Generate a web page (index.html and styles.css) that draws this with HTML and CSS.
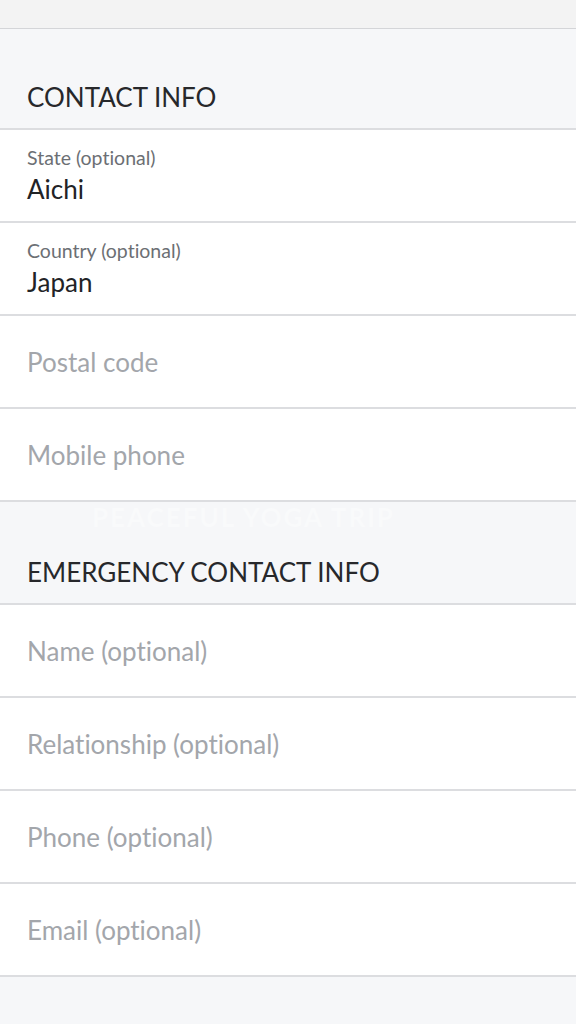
FILE: index.html
```html
<!DOCTYPE html>
<html>
<head>
<meta charset="utf-8">
<link rel="stylesheet" href="styles.css">
</head>
<body>
<div class="topbar"></div>
<div class="section-head first"><h2>CONTACT INFO</h2></div>
<div class="field filled"><span class="label">State (optional)</span><span class="value">Aichi</span></div>
<div class="field filled"><span class="label">Country (optional)</span><span class="value">Japan</span></div>
<div class="field"><span class="placeholder">Postal code</span></div>
<div class="field"><span class="placeholder">Mobile phone</span></div>
<div class="section-head"><span class="watermark">PEACEFUL YOGA TRIP</span><h2>EMERGENCY CONTACT INFO</h2></div>
<div class="field"><span class="placeholder">Name (optional)</span></div>
<div class="field"><span class="placeholder">Relationship (optional)</span></div>
<div class="field"><span class="placeholder">Phone (optional)</span></div>
<div class="field"><span class="placeholder">Email (optional)</span></div>
<div class="footer"></div>
</body>
</html>
```
FILE: styles.css
```css
html, body {
  margin: 0;
  padding: 0;
  background: #f6f7f9;
  font-family: Lato, "Noto Sans", sans-serif;
  font-variant-ligatures: none;
}
.topbar {
  height: 28px;
  background: #f3f3f3;
  border-bottom: 1px solid #d4d5d8;
}
.section-head {
  position: relative;
  height: 103px;
  background: #f6f7f9;
  border-bottom: 2px solid #dcdde0;
  display: flex;
  align-items: flex-end;
  box-sizing: border-box;
  padding: 0 27px 15px;
}
.section-head.first {
  height: 101px;
}
.section-head h2 {
  margin: 0;
  font-weight: 400;
  font-size: 26px;
  line-height: 32px;
  color: #27282b;
}
.watermark {
  position: absolute;
  left: 92px;
  top: 2px;
  font-size: 26px;
  line-height: 26px;
  font-weight: 700;
  color: #f9fafb;
  letter-spacing: 2px;
}
.field {
  height: 93px;
  box-sizing: border-box;
  background: #fff;
  border-bottom: 2px solid #dcdde0;
  padding: 0 27px;
  display: flex;
  flex-direction: column;
  justify-content: center;
}
.field.filled {
  justify-content: flex-start;
  padding-top: 16px;
}
.label {
  font-size: 19.5px;
  line-height: 24px;
  color: #6c6f74;
}
.value {
  font-size: 26px;
  line-height: 32px;
  margin-top: 3px;
  color: #222326;
}
.placeholder {
  font-size: 26px;
  line-height: 32px;
  color: #a3a6ab;
}
.footer {
  height: 48px;
}
```
